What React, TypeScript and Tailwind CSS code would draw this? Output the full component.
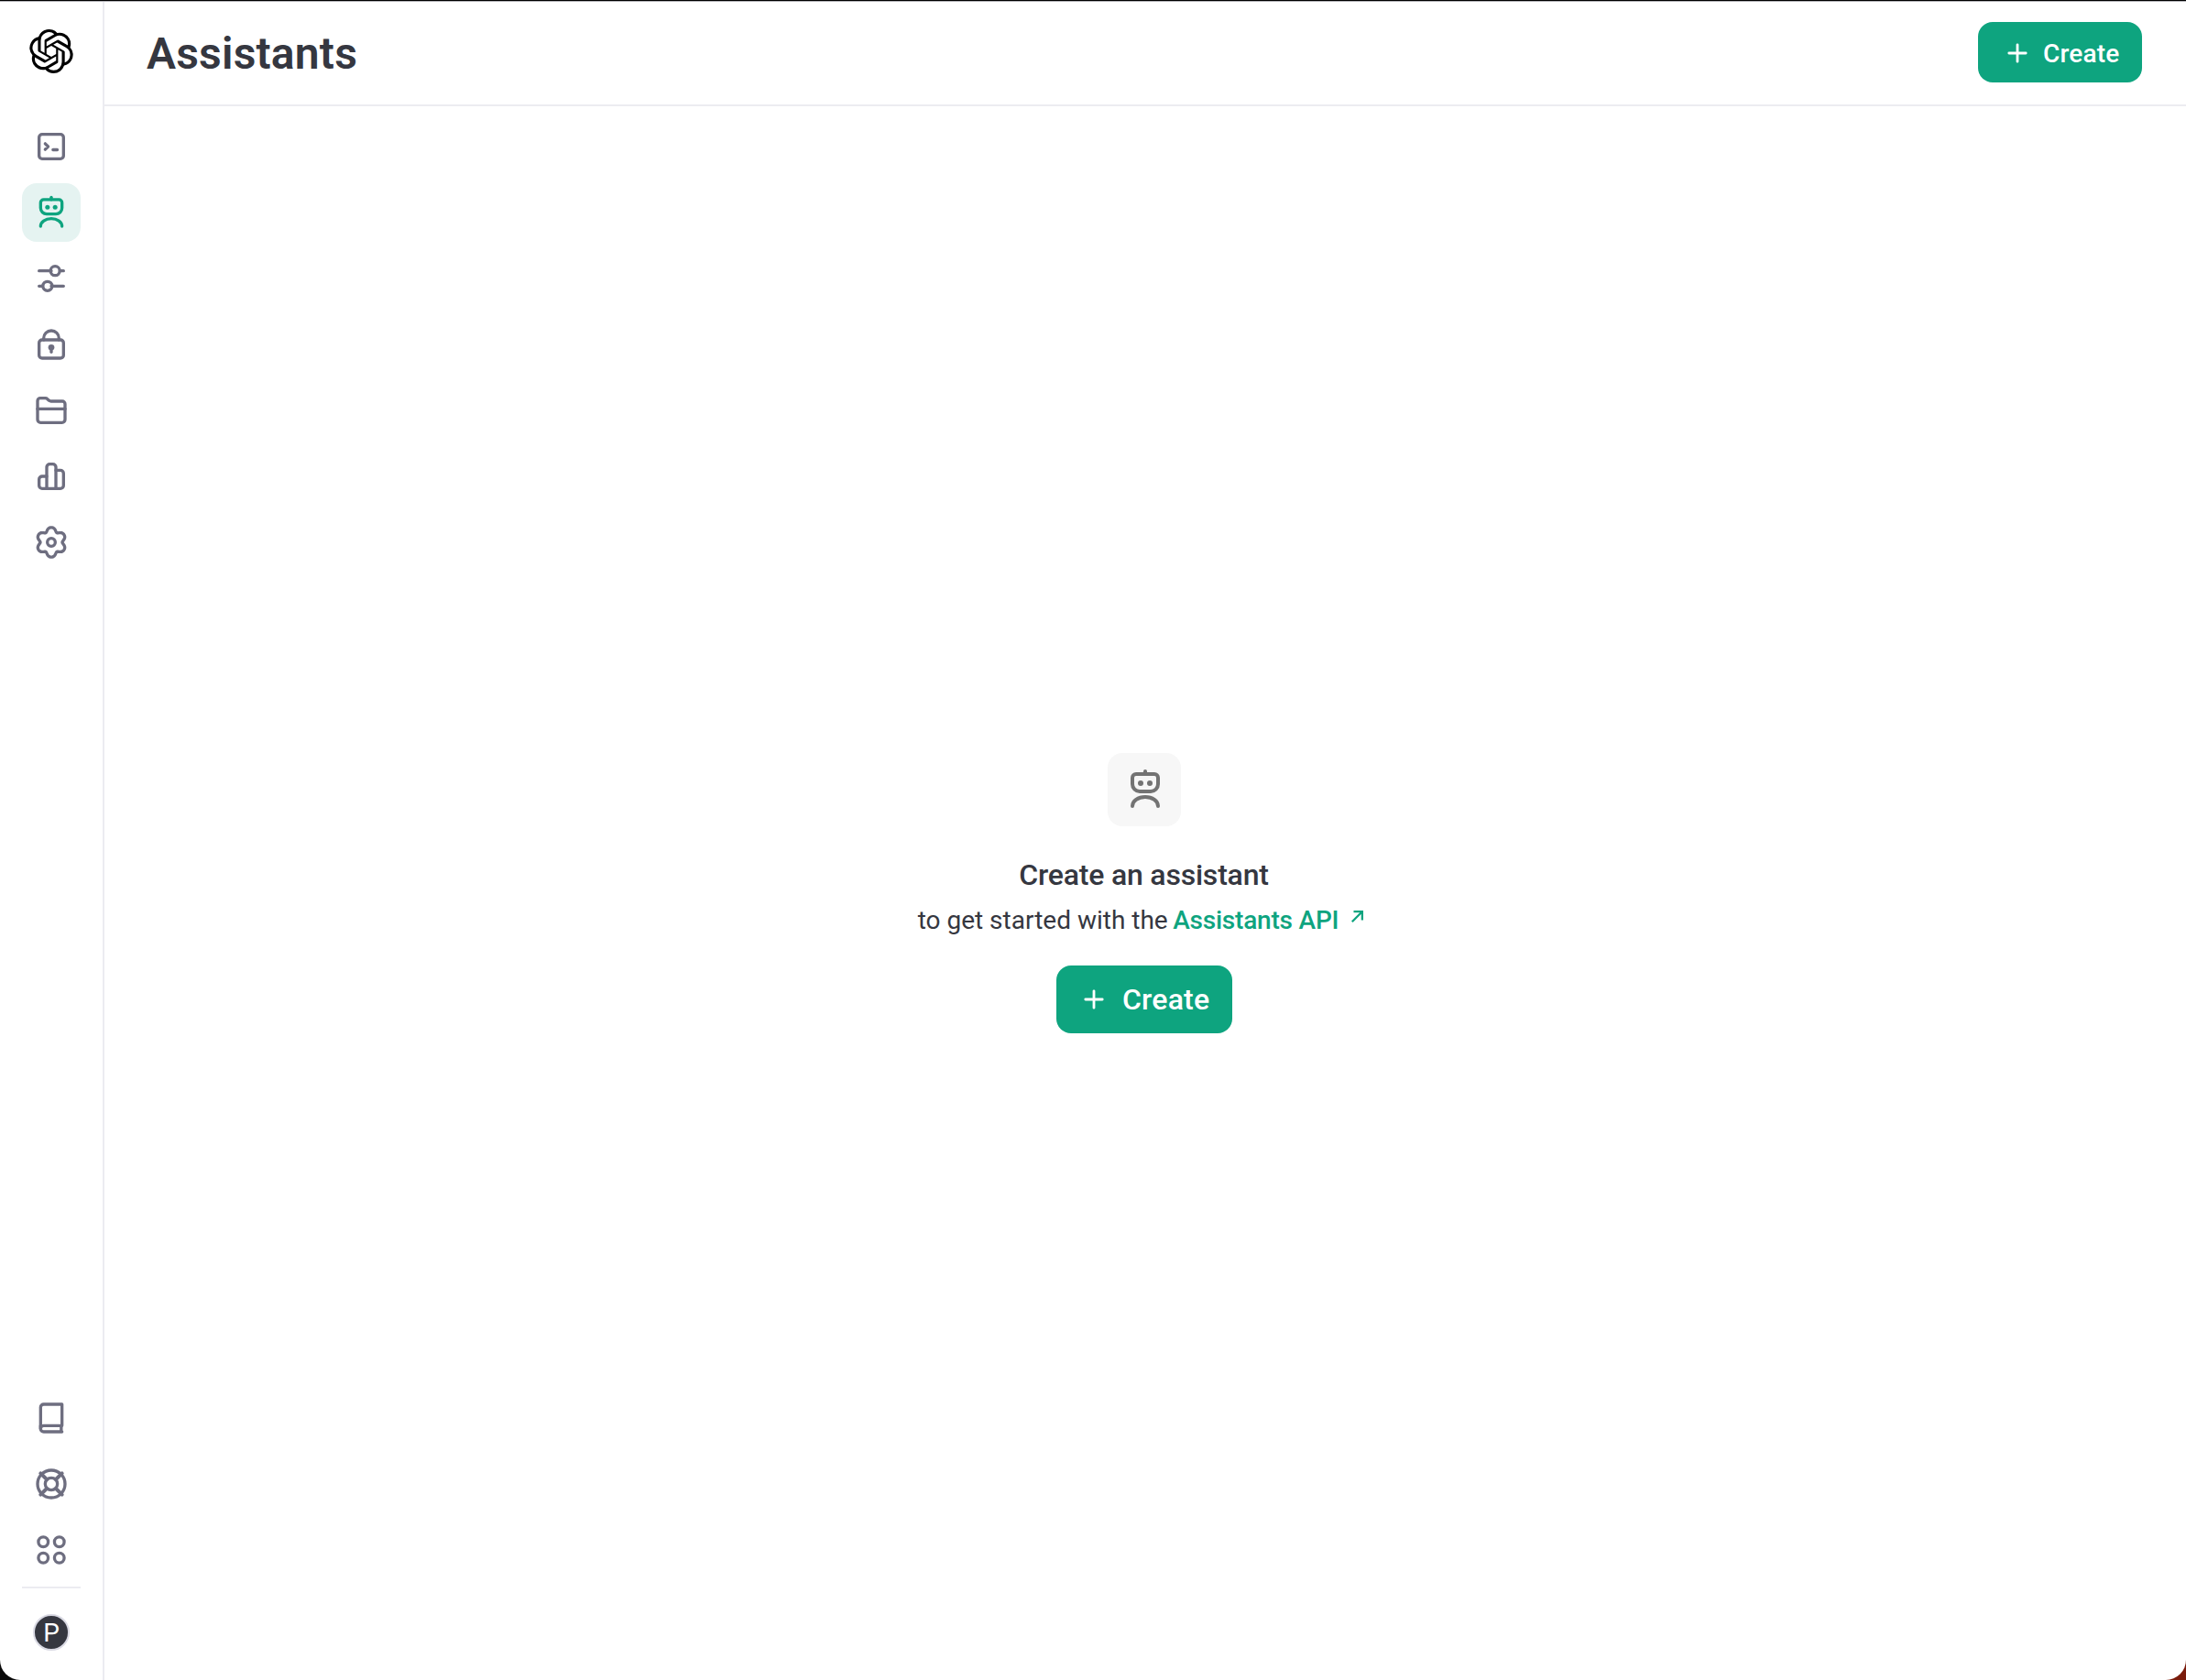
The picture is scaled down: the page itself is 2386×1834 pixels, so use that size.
import type { ReactNode } from "react";
import { SiOpenai } from "react-icons/si";

function Icon({ children, className = "size-10" }: { children: ReactNode; className?: string }) {
  return (
    <svg
      viewBox="0 0 24 24"
      fill="none"
      stroke="currentColor"
      strokeWidth={2}
      strokeLinecap="round"
      strokeLinejoin="round"
      className={`shrink-0 ${className}`}
      aria-hidden="true"
    >
      {children}
    </svg>
  );
}

// Six-lobed outline centred in the 24-unit icon box.
const gearOutline =
  Array.from({ length: 120 }, (_, i) => {
    const a = (i / 120) * Math.PI * 2;
    const r = 8.65 + 1.25 * Math.cos(6 * a) - 0.2 * Math.cos(12 * a);
    return `${i ? "L" : "M"}${(12 + r * Math.sin(a)).toFixed(2)} ${(12 - r * Math.cos(a)).toFixed(2)}`;
  }).join("") + "Z";

const robot = (
  <>
    <path d="M12 2v1.5" />
    <path d="M5 5.5a2 2 0 0 1 2-2h10a2 2 0 0 1 2 2V9a4 4 0 0 1-4 4H9a4 4 0 0 1-4-4V5.5Z" />
    <path d="M5 21c0-2.8 3.1-5 7-5s7 2.2 7 5" />
    <circle cx="9.5" cy="8.5" r="1.5" fill="currentColor" stroke="none" />
    <circle cx="14.5" cy="8.5" r="1.5" fill="currentColor" stroke="none" />
  </>
);

const terminal = (
  <>
    <rect x="4" y="4" width="16" height="16" rx="2" />
    <path d="m8 10.1 1.9 1.9L8 13.9M13.1 14.1h2.8" />
  </>
);

const sliders = (
  <>
    <path d="M4 7h8M18 7h2M4 17h2M12 17h8" />
    <circle cx="14.5" cy="7" r="3" />
    <circle cx="9.5" cy="17" r="3" />
  </>
);

const lock = (
  <>
    <rect x="4" y="9" width="16" height="12" rx="2" />
    <path d="M7 9V8a5 5 0 0 1 10 0v1" />
    <circle cx="12" cy="14" r="2" fill="currentColor" stroke="none" />
    <path d="M12 14.5V17" />
  </>
);

const folder = (
  <>
    <path d="M3 5.8A1.8 1.8 0 0 1 4.8 4h3.3c.5 0 1 .2 1.4.6l1 .9c.4.3.8.5 1.3.5h7.4A1.8 1.8 0 0 1 21 7.8V18a2 2 0 0 1-2 2H5a2 2 0 0 1-2-2V5.8Z" />
    <path d="M3 11h18" />
  </>
);

const bars = (
  <>
    <path d="M9 20V6a2 2 0 0 1 2-2h2a2 2 0 0 1 2 2v14" />
    <path d="M9 12H6a2 2 0 0 0-2 2v4a2 2 0 0 0 2 2h12a2 2 0 0 0 2-2v-8a2 2 0 0 0-2-2h-3" />
  </>
);

const gear = (
  <>
    <path d={gearOutline} />
    <circle cx="12" cy="12" r="2.6" />
  </>
);

const book = (
  <>
    <path d="M19 17H7a2 2 0 0 0-2 2V5a2 2 0 0 1 2-2h12v14Z" />
    <path d="M5 17v2a2 2 0 0 0 2 2h12M18.5 17v4" />
  </>
);

const lifebuoy = (
  <>
    <circle cx="12" cy="12" r="9" />
    <circle cx="12" cy="12" r="4" />
    <path d="m5 5 4 4M19 5l-4 4M5 19l4-4M19 19l-4-4" strokeWidth={2.4} />
  </>
);

const apps = (
  <>
    <circle cx="6.75" cy="6.75" r="3.2" />
    <circle cx="17.25" cy="6.75" r="3.2" />
    <circle cx="6.75" cy="17.25" r="3.2" />
    <circle cx="17.25" cy="17.25" r="3.2" />
  </>
);

function NavItem({ icon, label, active = false }: { icon: ReactNode; label: string; active?: boolean }) {
  return (
    <button
      aria-label={label}
      className={
        active
          ? "flex size-16 items-center justify-center rounded-2xl bg-[#e5f3f1] text-[#0ea47f]"
          : "flex size-16 items-center justify-center rounded-2xl text-[#6e6e80]"
      }
    >
      <Icon>{icon}</Icon>
    </button>
  );
}

function Plus() {
  return (
    <svg viewBox="0 0 28 28" className="size-7 shrink-0" fill="none" stroke="currentColor" strokeWidth={2.8} strokeLinecap="round" aria-hidden="true">
      <path d="M14 4.8v18.4M4.8 14h18.4" />
    </svg>
  );
}

export default function App() {
  return (
    <div className="h-[1834px] w-[2386px] bg-linear-to-r from-[#0a0a0a] from-50% to-[#7a1c0c] to-50% font-['Roboto',sans-serif] text-[#353740]">
      <div className="flex h-full w-full overflow-hidden rounded-b-[22px] bg-white">
        <aside className="flex w-[114px] shrink-0 flex-col items-center border-r-2 border-[#ececf1] pt-8">
          <SiOpenai className="size-12 text-black" />
          <nav className="mt-12 flex flex-col gap-2">
            <NavItem label="Playground" icon={terminal} />
            <NavItem label="Assistants" icon={robot} active />
            <NavItem label="Fine-tuning" icon={sliders} />
            <NavItem label="API keys" icon={lock} />
            <NavItem label="Files" icon={folder} />
            <NavItem label="Usage" icon={bars} />
            <NavItem label="Settings" icon={gear} />
          </nav>
          <div className="mt-auto flex flex-col items-center gap-2">
            <NavItem label="Documentation" icon={book} />
            <NavItem label="Help" icon={lifebuoy} />
            <NavItem label="All products" icon={apps} />
          </div>
          <div className="mt-2 h-0.5 w-16 bg-[#ececf1]" />
          <div className="mt-7 mb-8 flex size-10 items-center justify-center rounded-full border-2 border-[#d9d9e3] bg-[#353740] pt-0.5 text-[28px] leading-none text-white">
            P
          </div>
        </aside>

        <div className="flex flex-1 flex-col">
          <header className="flex h-[116px] items-center justify-between border-b-2 border-[#ececf1] pr-12 pl-[46px]">
            <h1 className="pt-[3px] text-5xl leading-[56px] font-semibold tracking-[0.2px]">Assistants</h1>
            <button className="flex h-[66px] w-[179px] items-center gap-3.5 rounded-2xl bg-[#0ea47f] pt-0.5 pl-[29px] text-[28px] font-medium text-white">
              <Plus />
              <span className="pt-0.5 tracking-[0.2px]">Create</span>
            </button>
          </header>

          <main className="flex flex-1 flex-col items-center pt-[706px] pr-0.5">
            <div className="flex size-20 items-center justify-center rounded-2xl bg-[#f7f7f7] pl-0.5 text-[#737373]">
              <Icon className="size-12">{robot}</Icon>
            </div>
            <h2 className="mt-[33px] pr-px text-[32px] leading-10 font-medium tracking-[-0.2px]">Create an assistant</h2>
            <p className="mt-2.5 flex h-10 items-center text-[28px] leading-10 whitespace-pre">
              <span className="-mr-[1.5px]">to get started with the </span>
              <a className="flex items-center font-medium tracking-[-0.2px] text-[#0ea47f]">
                Assistants API
                <svg viewBox="0 0 35 24" className="h-6 w-[35px]" fill="none" stroke="currentColor" strokeWidth={2.3} aria-hidden="true">
                  <path d="M14.8 13.2 25 3M16.5 2.15H25.85V11.5" />
                </svg>
              </a>
            </p>
            <button className="mt-[29px] flex h-[74px] w-48 items-center gap-[17px] rounded-2xl bg-[#0ea47f] pl-[27px] text-[32px] font-medium text-white">
              <Plus />
              <span className="tracking-[0.2px]">Create</span>
            </button>
          </main>
        </div>
      </div>
      <div className="absolute top-0 left-0 h-0.5 w-[2386px] border-t border-black bg-[#b4b4b8]" />
    </div>
  );
}
